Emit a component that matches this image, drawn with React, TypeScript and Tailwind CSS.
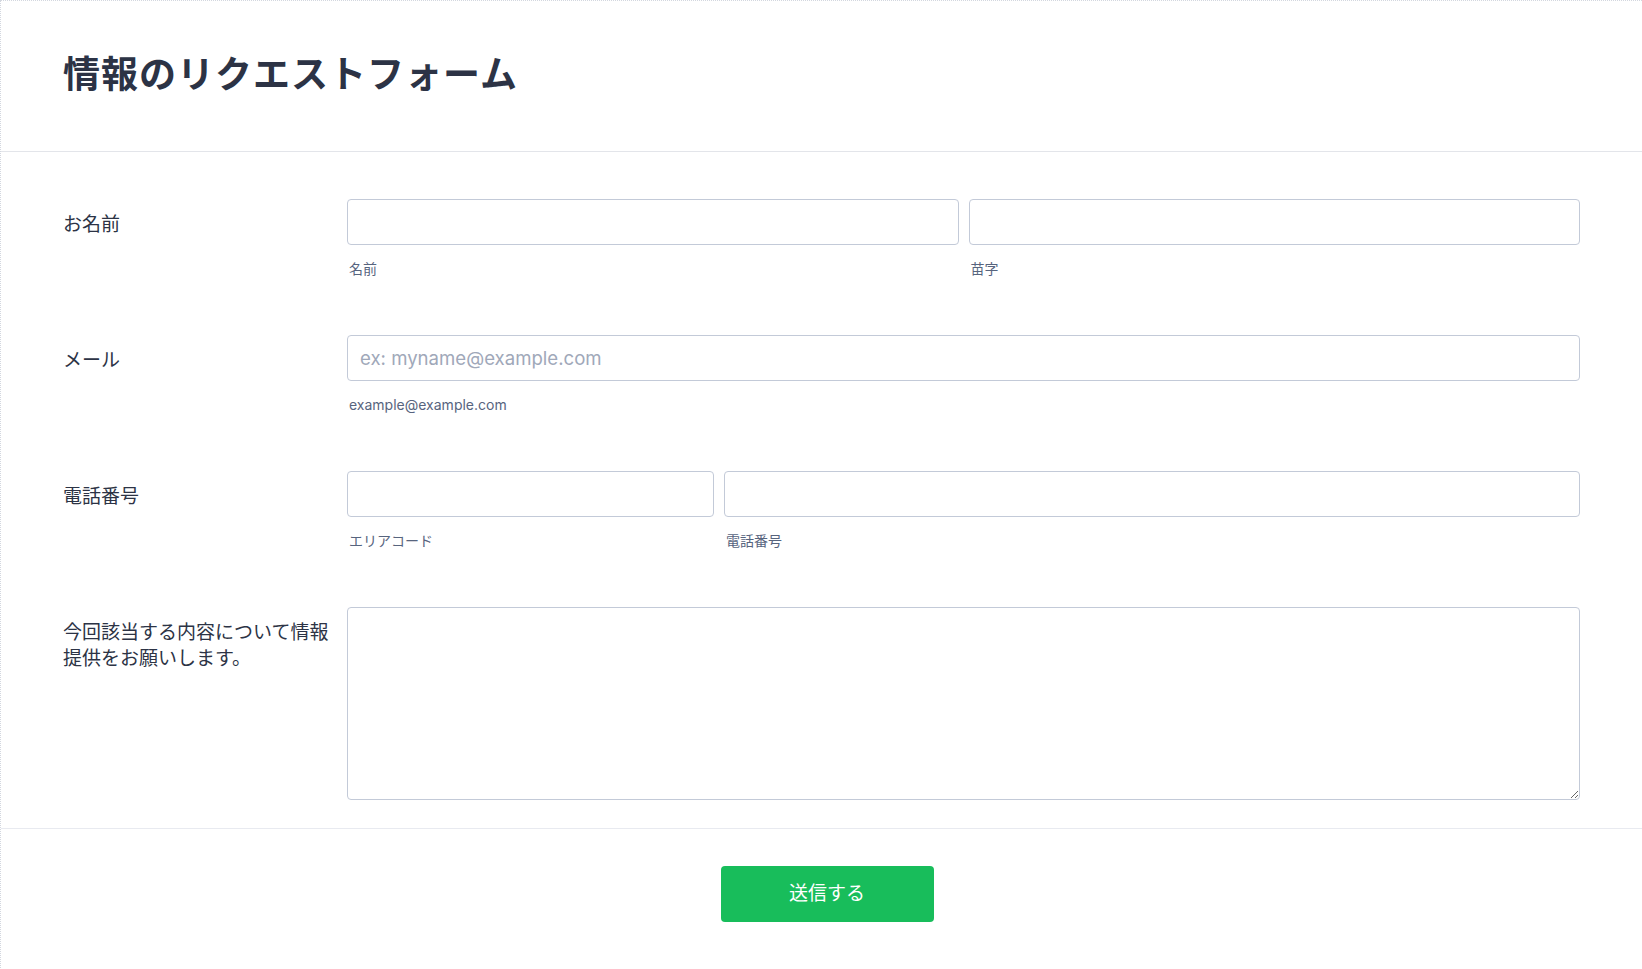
import React from 'react';

const font = { fontFamily: 'Inter, "Noto Sans CJK JP", sans-serif' };

function Row({
  label,
  children,
  last,
}: {
  label: React.ReactNode;
  children: React.ReactNode;
  last?: boolean;
}) {
  return (
    <div className={`flex ${last ? '' : 'pb-[56px]'}`}>
      <div className="w-[284px] shrink-0 pt-[13px] pr-2 text-[19px] leading-[26px] text-[#2c3345]">
        {label}
      </div>
      <div className="flex-1">{children}</div>
    </div>
  );
}

function Field({ sub, placeholder, className }: { sub: string; placeholder?: string; className?: string }) {
  return (
    <div className={className}>
      <input
        type="text"
        placeholder={placeholder}
        className="block h-[46px] w-full rounded-[4px] border border-[#c3cad8] bg-white px-[12px] text-[18.6px] text-[#2c3345] outline-none placeholder:text-[#a0a8b9]"
      />
      <div className="mt-[14px] pl-[2px] text-[14px] leading-[20px] text-[#57647e]">{sub}</div>
    </div>
  );
}

export default function App() {
  return (
    <div
      style={font}
      className="min-h-[969px] w-full border-l border-t border-dotted border-[#d3d7df] bg-white"
    >
      <header className="flex h-[151px] items-center border-b border-[#e3e5ea] pl-[62px] pr-[63px]">
        <h1 className="pb-[2px] text-[37px] font-bold tracking-[1px] text-[#2c3345]">
          情報のリクエストフォーム
        </h1>
      </header>

      <div className="pt-[47px] pr-[62px] pb-[28px] pl-[62px]">
        <Row label="お名前">
          <div className="flex gap-[10px]">
            <Field sub="名前" className="flex-1" />
            <Field sub="苗字" className="flex-1" />
          </div>
        </Row>
        <Row label="メール">
          <Field sub="example@example.com" placeholder="ex: myname@example.com" />
        </Row>
        <Row label="電話番号">
          <div className="flex gap-[10px]">
            <Field sub="エリアコード" className="w-[367px]" />
            <Field sub="電話番号" className="flex-1" />
          </div>
        </Row>
        <Row
          last
          label={
            <>
              今回該当する内容について情報
              <br />
              提供をお願いします。
            </>
          }
        >
          <textarea className="block h-[193px] w-full rounded-[4px] border border-[#c3cad8] bg-white px-[12px] py-[10px] text-[18px] outline-none" />
        </Row>
      </div>

      <div className="flex justify-center border-t border-[#e8eaf0] pt-[37px] pb-[48px] pl-[11px]">
        <button className="h-[56px] w-[213px] rounded-[4px] bg-[#18bd5b] text-[19px] text-white">
          送信する
        </button>
      </div>
    </div>
  );
}
